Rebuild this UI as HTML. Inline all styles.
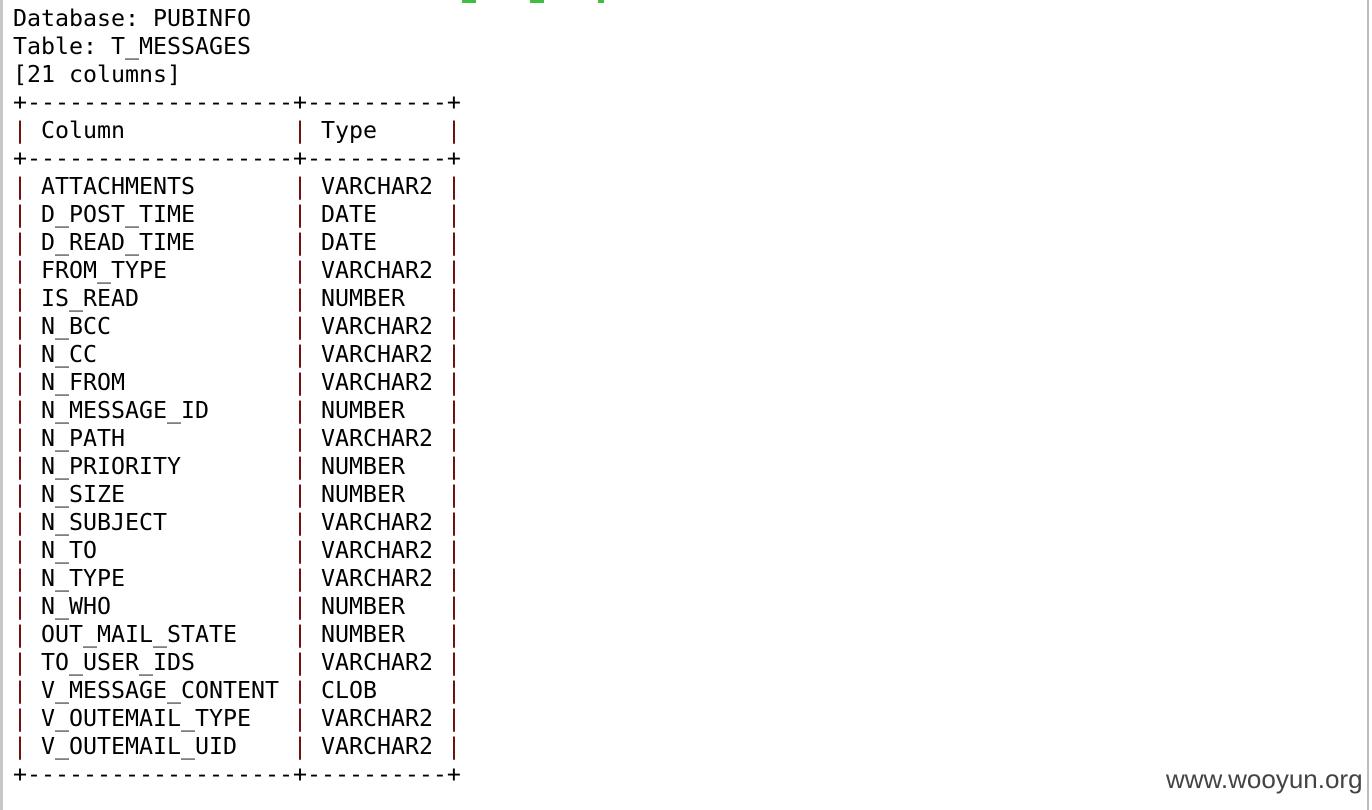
<!DOCTYPE html>
<html><head><meta charset="utf-8"><style>
html,body{margin:0;padding:0;background:#fff;width:1372px;height:810px;overflow:hidden;position:relative}
pre{position:absolute;left:13px;top:5px;margin:0;font-family:"DejaVu Sans Mono","Liberation Mono",monospace;font-size:23.26px;line-height:28px;color:#000}
b{font-weight:normal;color:#6a0a0a}
.lb{position:absolute;left:0;top:0;width:3px;height:810px;background:#c8c8c8}
.rb{position:absolute;left:1367px;top:0;width:2px;height:810px;background:#bdbdbd}
.g{position:absolute;top:0;height:3px;background:#3fbf3f}
.w{position:absolute;left:1166px;top:764px;font-family:"Liberation Sans",sans-serif;font-size:26px;color:#444}
</style></head><body>
<div class="lb"></div><div class="rb"></div>
<div class="g" style="left:462px;width:14px"></div>
<div class="g" style="left:530px;width:14px"></div>
<div class="g" style="left:598px;width:6px"></div>
<pre>Database: PUBINFO
Table: T_MESSAGES
[21 columns]
+-------------------+----------+
<b>|</b> Column            <b>|</b> Type     <b>|</b>
+-------------------+----------+
<b>|</b> ATTACHMENTS       <b>|</b> VARCHAR2 <b>|</b>
<b>|</b> D_POST_TIME       <b>|</b> DATE     <b>|</b>
<b>|</b> D_READ_TIME       <b>|</b> DATE     <b>|</b>
<b>|</b> FROM_TYPE         <b>|</b> VARCHAR2 <b>|</b>
<b>|</b> IS_READ           <b>|</b> NUMBER   <b>|</b>
<b>|</b> N_BCC             <b>|</b> VARCHAR2 <b>|</b>
<b>|</b> N_CC              <b>|</b> VARCHAR2 <b>|</b>
<b>|</b> N_FROM            <b>|</b> VARCHAR2 <b>|</b>
<b>|</b> N_MESSAGE_ID      <b>|</b> NUMBER   <b>|</b>
<b>|</b> N_PATH            <b>|</b> VARCHAR2 <b>|</b>
<b>|</b> N_PRIORITY        <b>|</b> NUMBER   <b>|</b>
<b>|</b> N_SIZE            <b>|</b> NUMBER   <b>|</b>
<b>|</b> N_SUBJECT         <b>|</b> VARCHAR2 <b>|</b>
<b>|</b> N_TO              <b>|</b> VARCHAR2 <b>|</b>
<b>|</b> N_TYPE            <b>|</b> VARCHAR2 <b>|</b>
<b>|</b> N_WHO             <b>|</b> NUMBER   <b>|</b>
<b>|</b> OUT_MAIL_STATE    <b>|</b> NUMBER   <b>|</b>
<b>|</b> TO_USER_IDS       <b>|</b> VARCHAR2 <b>|</b>
<b>|</b> V_MESSAGE_CONTENT <b>|</b> CLOB     <b>|</b>
<b>|</b> V_OUTEMAIL_TYPE   <b>|</b> VARCHAR2 <b>|</b>
<b>|</b> V_OUTEMAIL_UID    <b>|</b> VARCHAR2 <b>|</b>
+-------------------+----------+</pre>
<div class="w">www.wooyun.org</div>
</body></html>
